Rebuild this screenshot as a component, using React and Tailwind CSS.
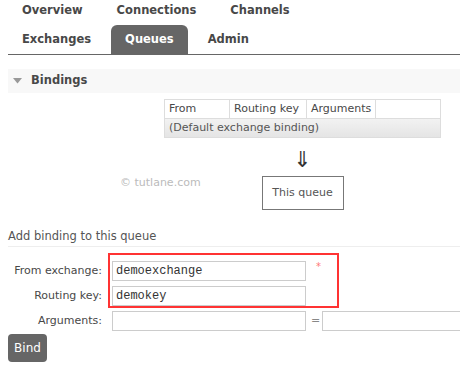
import React from "react";

const tabs = [
  { label: "Overview" },
  { label: "Connections" },
  { label: "Channels" },
  { label: "Exchanges" },
  { label: "Queues", active: true },
  { label: "Admin" },
];

const Input = ({ value, className = "" }) => (
  <div
    className={`shrink-0 h-[20px] border border-[#ccc] bg-white px-[3px] flex items-center font-['Liberation_Mono','Courier_New',monospace] text-[12px] text-[#333] ${className}`}
  >
    {value}
  </div>
);

const App = () => {
  return (
    <div className="relative w-[460px] h-[366px] overflow-hidden bg-white pl-2 font-['DejaVu_Sans',sans-serif] text-[11px] text-[#484848]">
      {/* Tabs */}
      <div className="border-b border-[#666]">
        <ul className="flex flex-wrap w-[320px] gap-x-[6px] -mt-[4px]">
          {tabs.map((t) => (
            <li
              key={t.label}
              className={`h-[29px] px-[14px] flex items-center font-bold text-[11.5px] ${
                t.active
                  ? "bg-[#666] text-white rounded-t-[6px]"
                  : "text-[#484848]"
              }`}
            >
              {t.label}
            </li>
          ))}
        </ul>
      </div>

      {/* Bindings header */}
      <div className="mt-[14px] h-[24px] bg-[#f8f8f8] flex items-center">
        <svg width="9" height="6" viewBox="0 0 9 6" className="ml-[5px]">
          <path d="M0 0 H9 L4.5 5.5 Z" fill="#999" />
        </svg>
        <span className="ml-[9px] font-bold text-[11.5px] text-[#484848]">
          Bindings
        </span>
      </div>

      {/* Bindings table + this queue */}
      <div className="ml-[156px] w-[277px] mt-[6px] flex flex-col items-center">
        <table className="w-full border-collapse text-[11px]">
          <thead>
            <tr className="h-[19px] bg-white">
              <th className="w-[65px] border border-[#ddd] px-[4px] text-left font-normal">From</th>
              <th className="w-[77px] border border-[#ddd] px-[4px] text-left font-normal">Routing key</th>
              <th className="w-[69px] border border-[#ddd] px-[4px] text-left font-normal">Arguments</th>
              <th className="border border-[#ddd]"></th>
            </tr>
          </thead>
          <tbody>
            <tr className="h-[19px] bg-gradient-to-b from-[#f2f2f2] to-[#e4e4e4]">
              <td colSpan={4} className="border border-[#ddd] px-[4px] text-[#555]">
                (Default exchange binding)
              </td>
            </tr>
          </tbody>
        </table>
        <div className="mt-[12px] h-[20px] leading-[20px] text-[22px] text-[#333]">
          ⇓
        </div>
        <div className="mt-[6px] w-[82px] h-[34px] border border-[#777] flex items-center justify-center text-[11px] text-[#555]">
          This queue
        </div>
      </div>

      {/* watermark */}
      <div className="absolute left-[120px] top-[175px] text-[11px] text-[#bbb]">
        © tutlane.com
      </div>

      {/* Add binding */}
      <div className="mt-[18px] pb-[1px] border-b border-[#eee] text-[11.5px] text-[#555]">
        Add binding to this queue
      </div>

      <div className="relative mt-[11px]">
        <div className="flex items-center h-[25px]">
          <span className="shrink-0 w-[95px] text-right pr-[1px]">From exchange:</span>
          <Input value="demoexchange" className="ml-[9px] w-[194px]" />
          <span className="ml-[10px] -mt-[8px] text-[10px] text-[#f77]">*</span>
        </div>
        <div className="flex items-center h-[25px]">
          <span className="shrink-0 w-[95px] text-right pr-[1px]">Routing key:</span>
          <Input value="demokey" className="ml-[9px] w-[194px]" />
        </div>
        <div className="flex items-center h-[25px]">
          <span className="shrink-0 w-[95px] text-right pr-[1px]">Arguments:</span>
          <Input value="" className="ml-[9px] w-[194px]" />
          <span className="shrink-0 ml-[3px] w-[13px] text-center text-[#888]">=</span>
          <Input value="" className="w-[160px]" />
        </div>
        {/* red highlight */}
        <div className="absolute left-[100px] -top-[5px] w-[231px] h-[55px] border-2 border-[#f33]" />
      </div>

      <button className="mt-[1px] h-[28px] w-[39px] rounded-[4px] bg-[#666] text-white text-[12px]">
        Bind
      </button>
    </div>
  );
};

export default App;
